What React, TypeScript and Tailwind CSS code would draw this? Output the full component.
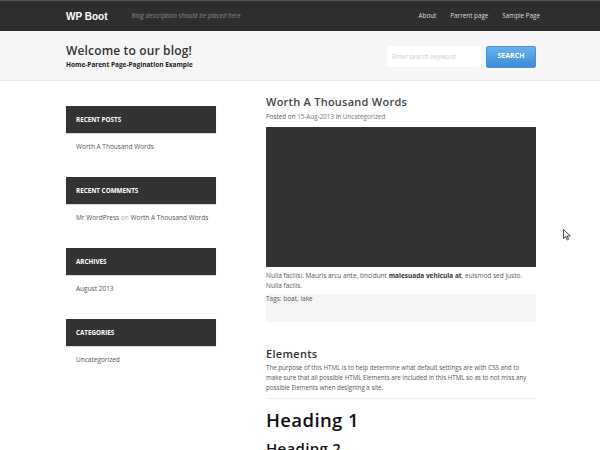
import React from "react";

const widgets = [
  { title: "Recent Posts", body: <a className="text-[#555]">Worth A Thousand Words</a> },
  {
    title: "Recent Comments",
    body: (
      <span>
        <a className="text-[#555]">Mr WordPress</a> <span className="text-[#aaa]">on</span>{" "}
        <a className="text-[#555]">Worth A Thousand Words</a>
      </span>
    ),
  },
  { title: "Archives", body: <a className="text-[#555]">August 2013</a> },
  { title: "Categories", body: <a className="text-[#555]">Uncategorized</a> },
];

const App: React.FC = () => {
  return (
    <div className="relative h-[450px] w-[600px] overflow-hidden bg-white font-['Open_Sans',sans-serif] text-[#555]">
      {/* top navbar */}
      <nav className="h-[31px] border-t border-[#555] bg-[#2e2e2e]">
        <div className="ml-[66px] mr-[60px] flex h-full items-center">
          <span className="font-['Liberation_Sans',sans-serif] text-[10px] font-bold text-white">WP Boot</span>
          <span className="ml-[24px] text-[6.4px] italic text-[#8a8a8a]">Blog description should be placed here</span>
          <ul className="ml-auto flex gap-[14px] text-[6.3px] text-[#ddd]">
            <li>About</li>
            <li>Parrent page</li>
            <li>Sample Page</li>
          </ul>
        </div>
      </nav>

      {/* header */}
      <header className="h-[50px] border-b border-[#e6e6e6] bg-[#f6f6f6]">
        <div className="ml-[66px] mr-[64px] flex h-full items-center">
          <div className="pt-[1px]">
            <h1 className="text-[12px] font-semibold leading-[17px] tracking-[0.15px] text-[#333]">
              Welcome to our blog!
            </h1>
            <p className="text-[6.5px] font-bold leading-[11px] text-[#222]">Home-Parent Page-Pagination Example</p>
          </div>
          <div className="ml-auto flex items-center gap-[5px] pt-[2px]">
            <div className="flex h-[21px] w-[94px] items-center rounded-[2px] bg-white px-[5px] text-[6.3px] text-[#ccc]">
              Enter search keyword
            </div>
            <button className="flex h-[22px] w-[50px] items-center justify-center rounded-[2px] border border-[#4a90d6] bg-gradient-to-b from-[#66b3ee] to-[#3f8ad6] text-[7px] font-bold text-white">
              SEARCH
            </button>
          </div>
        </div>
      </header>

      {/* main */}
      <div className="ml-[66px] mr-[64px] flex gap-[50px]">
        <aside className="w-[150px] shrink-0 pt-[25px]">
          {widgets.map((w) => (
            <div key={w.title} className="mb-[25px]">
              <div className="flex h-[27px] items-center bg-[#333] px-[10px] text-[6.3px] font-bold uppercase text-white shadow-[0_1px_1px_rgba(0,0,0,0.15)]">
                {w.title}
              </div>
              <div className="mt-[9px] whitespace-nowrap pl-[10px] text-[6.5px] leading-[10px]">{w.body}</div>
            </div>
          ))}
        </aside>

        <main className="min-w-0 flex-1 pt-[13px]">
          <h2 className="text-[11px] font-semibold leading-[15px] tracking-[0.25px] text-[#444]">Worth A Thousand Words</h2>
          <p className="mt-[3px] text-[6.3px] leading-[10px] text-[#555]">
            Posted on <span className="text-[#777]">15-Aug-2013</span> in <span className="text-[#777]">Uncategorized</span>
          </p>
          <div className="mt-[5px] h-[140px] bg-[#333]" />
          <p className="mt-[4px] text-[6.5px] leading-[10px] text-[#555]">
            Nulla facilisi. Mauris arcu ante, tincidunt{" "}
            <strong className="font-bold text-[#333]">malesuada vehicula at</strong>, euismod sed justo. Nulla facilis.
          </p>
          <div className="mt-[3px] h-[28px] bg-[#f5f5f5] text-[6.5px] leading-[10px] text-[#555]">Tags: boat, lake</div>

          <h3 className="mt-[25px] text-[11px] font-semibold leading-[14px] tracking-[0.3px] text-[#333]">Elements</h3>
          <p className="mt-[2px] text-[6.2px] leading-[10px] text-[#555]">
            The purpose of this HTML is to help determine what default settings are with CSS and to make sure that all
            possible HTML Elements are included in this HTML so as to not miss any possible Elements when designing a
            site.
          </p>
          <hr className="mt-[5px] border-[#eee]" />
          <h1 className="mt-[9px] text-[18.5px] font-semibold leading-[24px] tracking-[0.4px] text-[#111]">Heading 1</h1>
          <h2 className="mt-[6px] text-[15px] font-semibold leading-[20px] tracking-[0.3px] text-[#111]">Heading 2</h2>
        </main>
      </div>

      {/* mouse pointer */}
      <svg className="absolute left-[563px] top-[229px]" width="8" height="12" viewBox="0 0 8 12">
        <path d="M0.5 0.5 L0.5 9.5 L2.8 7.5 L4.3 11 L5.6 10.4 L4.2 7 L7.3 7 Z" fill="#fff" stroke="#444" strokeWidth="1" />
      </svg>
    </div>
  );
};

export default App;
